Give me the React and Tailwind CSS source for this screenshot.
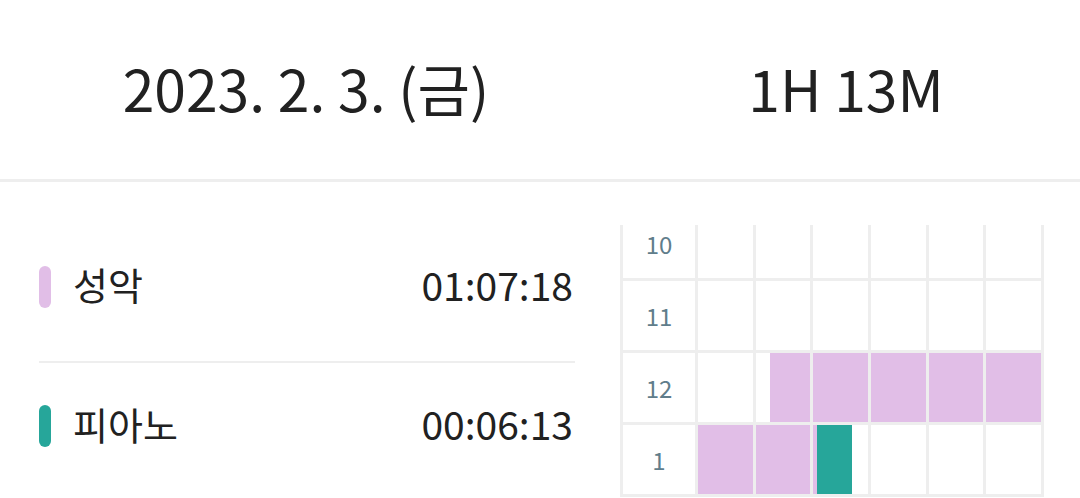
import React from 'react';

const subjects = [
  { name: '성악', time: '01:07:18', color: 'bg-[#e1bee7]' },
  { name: '피아노', time: '00:06:13', color: 'bg-[#26a69a]' },
];

// each fill: [startMinute, endMinute] inside the hour, with its colour
const hours = [
  { label: '10', fills: [] },
  { label: '11', fills: [] },
  { label: '12', fills: [{ from: 12.6, to: 60, color: 'bg-[#e1bee7]' }] },
  {
    label: '1',
    fills: [
      { from: 0, to: 20.6, color: 'bg-[#e1bee7]' },
      { from: 20.6, to: 27, color: 'bg-[#26a69a]' },
    ],
  },
];

const Cell = ({ index, fills }) => {
  const start = index * 10;
  const end = start + 10;
  const parts = fills
    .filter((f) => f.from < end && f.to > start)
    .map((f) => ({
      left: Math.max(0, (f.from - start) / 10),
      right: Math.min(1, (f.to - start) / 10),
      color: f.color,
    }));

  return (
    <div className="relative bg-white">
      {parts.map((p, i) => (
        <div
          key={i}
          className={`absolute top-0 bottom-0 ${p.color}`}
          style={{ left: `${p.left * 100}%`, width: `${(p.right - p.left) * 100}%` }}
        />
      ))}
    </div>
  );
};

const App = () => {
  return (
    <div
      className="w-[1080px] h-[498px] overflow-hidden bg-white text-[#212121]"
      style={{ fontFamily: '"Noto Sans CJK KR", "Noto Sans", sans-serif' }}
    >
      <div className="flex items-center h-[182px] border-b-[3px] border-[#eeeeee]">
        <div className="w-[612px] text-center text-[57px] leading-none pb-[4px]">2023. 2. 3. (금)</div>
        <div className="flex-1 text-center text-[57px] leading-none pb-[4px]">1H 13M</div>
      </div>

      <div className="flex">
        <div className="w-[536px] ml-[39px] pt-[30px]">
          {subjects.map((s, i) => (
            <div key={s.name}>
              {i > 0 && <div className="h-[2px] bg-[#eeeeee]" />}
              <div className={`flex items-center ${i === 0 ? 'h-[149px]' : 'h-[126px]'}`}>
                <div className={`w-[12px] h-[42px] rounded-full ${s.color}`} />
                <div className="ml-[22px] pb-[5px] text-[38px] leading-none">{s.name}</div>
                <div className="ml-auto mr-[2px] pb-[5px] text-[39px] leading-none">{s.time}</div>
              </div>
            </div>
          ))}
        </div>

        <div className="ml-[45px] mt-[43px] w-[424px] h-[280px] overflow-hidden">
          <div className="-mt-[16px] grid grid-cols-[72px_repeat(6,1fr)] auto-rows-[69px] gap-[3px] px-[3px] pb-[3px] bg-[#eeeeee]">
            {hours.map((h) => (
              <React.Fragment key={h.label}>
                <div className="bg-white flex items-center justify-center text-[24px] text-[#607d8b]">
                  {h.label}
                </div>
                {[0, 1, 2, 3, 4, 5].map((c) => (
                  <Cell key={c} index={c} fills={h.fills} />
                ))}
              </React.Fragment>
            ))}
          </div>
        </div>
      </div>
    </div>
  );
};

export default App;
